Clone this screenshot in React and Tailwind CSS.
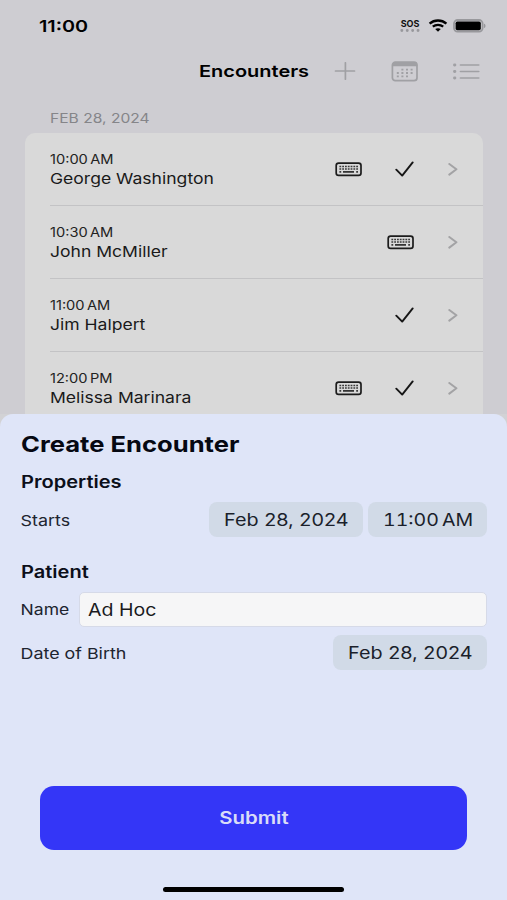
import React, { useState } from 'react';

const encounters = [
  { id: 1, time: '10:00 AM', name: 'George Washington', typed: true, done: true },
  { id: 2, time: '10:30 AM', name: 'John McMiller', typed: true, done: false },
  { id: 3, time: '11:00 AM', name: 'Jim Halpert', typed: false, done: true },
  { id: 4, time: '12:00 PM', name: 'Melissa Marinara', typed: true, done: true },
];

// Wide text, stretched sideways from its left edge
function Wide({ className = '', children }) {
  return (
    <span className={`inline-block whitespace-nowrap origin-left ${className}`}>{children}</span>
  );
}

function KeyboardIcon() {
  return (
    <svg width="27" height="15" viewBox="0 0 27 15" fill="none">
      <rect x="1.2" y="1.1" width="24.8" height="12.2" rx="2.4" stroke="#1c1c1c" strokeWidth="1.7" />
      <path d="M4.4 4.5H23M4.4 7H23" stroke="#3a3a3a" strokeWidth="1.7" strokeDasharray="1.8 1" />
      <path d="M4.4 9.9h1.8M21.2 9.9H23" stroke="#3a3a3a" strokeWidth="1.6" />
      <path d="M8 9.9h11" stroke="#222" strokeWidth="1.6" />
    </svg>
  );
}

function CheckIcon() {
  return (
    <svg width="19" height="16" viewBox="0 0 19 16" fill="none">
      <path d="M1.3 8.7L7.2 14.6L17.7 1.4" stroke="#161616" strokeWidth="1.9" strokeLinecap="round" strokeLinejoin="round" />
    </svg>
  );
}

function ChevronIcon() {
  return (
    <svg width="10" height="13" viewBox="0 0 10 13" fill="none">
      <path d="M1.3 1L8.4 6.3L1.3 11.6" stroke="#a3a3a5" strokeWidth="2" strokeLinecap="round" strokeLinejoin="round" />
    </svg>
  );
}

function StatusBar() {
  return (
    <div className="flex h-[50px] items-center pt-px pl-[39px] pr-[21px]">
      <Wide className="pt-[2px] text-[16.5px] font-semibold text-black scale-x-[1.2]">11:00</Wide>
      <div className="ml-auto flex items-center">
        <div className="mr-[8px] flex w-[20px] flex-col items-center">
          <span className="text-[9px] leading-[9px] font-bold text-[#111]">SOS</span>
          <svg width="20" height="3" viewBox="0 0 20 3" className="mt-[1px]">
            <path d="M1.8 1.5h18" stroke="#98989c" strokeWidth="2.8" strokeLinecap="round" strokeDasharray="0.1 5.3" />
          </svg>
        </div>
        <svg width="20" height="13" viewBox="0 0 20 13" fill="none" className="mr-[5px]">
          <path d="M1.6 4.6C6.4 0.4 13.6 0.4 18.4 4.6" stroke="#000" strokeWidth="2.4" />
          <path d="M4.8 7.7C7.8 5.2 12.2 5.2 15.2 7.7" stroke="#000" strokeWidth="2.3" />
          <path d="M7.2 10.1C8.8 8.8 11.2 8.8 12.8 10.1L10 12.7Z" fill="#000" />
        </svg>
        <svg width="33" height="14" viewBox="0 0 33 14" fill="none">
          <rect x="1" y="1" width="28.6" height="11.6" rx="3.6" stroke="#98989c" strokeWidth="1.8" />
          <rect x="2.6" y="2.5" width="25.2" height="8.7" rx="1.8" fill="#000" />
          <path d="M31 4.7c2 0.6 2 3.7 0 4.3z" fill="#98989c" />
        </svg>
      </div>
    </div>
  );
}

function NavBar() {
  return (
    <div className="flex h-[42px] items-center pl-[199px] text-[#a0a0a4]">
      <Wide className="w-[135px] text-[16.5px] font-semibold text-black scale-x-[1.21]">Encounters</Wide>
      <svg width="22" height="18" viewBox="0 0 22 18" fill="none" stroke="currentColor" className="shrink-0">
        <path d="M1.5 9h19M11.4 0.8v16.4" strokeWidth="1.7" strokeLinecap="round" />
      </svg>
      <svg width="28" height="21" viewBox="0 0 28 21" fill="none" className="ml-[35px] shrink-0">
        <rect x="1.4" y="1.1" width="24.6" height="18.6" rx="3" stroke="currentColor" strokeWidth="1.7" />
        <path d="M1.2 5.2V4a3 3 0 0 1 3-3h19a3 3 0 0 1 3 3v1.2z" fill="currentColor" />
        <path d="M10.4 8.6h12M5.8 12h16.6M5.8 15.4h12" stroke="currentColor" strokeWidth="1.8" strokeDasharray="2 2.6" />
      </svg>
      <svg width="28" height="17" viewBox="0 0 28 17" fill="none" stroke="currentColor" className="ml-[33px] shrink-0">
        <path d="M8.4 2h18.4M8.4 8.5h18.4M8.4 15h18.4" strokeWidth="1.6" strokeLinecap="round" />
        <path d="M2.5 2h0.4M2.5 8.5h0.4M2.5 15h0.4" strokeWidth="2.9" strokeLinecap="round" />
      </svg>
    </div>
  );
}

function EncounterRow({ encounter, last }) {
  return (
    <li className={`ml-[25px] flex h-[73px] items-center border-b ${last ? 'border-transparent' : 'border-[#c3c3c5]'}`}>
      <div className="flex flex-col pt-[2px]">
        <Wide className="text-[12.5px] leading-[18px] text-[#222] [word-spacing:-1.5px] scale-x-[1.17]">{encounter.time}</Wide>
        <Wide className="text-[15px] leading-[20px] text-[#1a1a1a] scale-x-[1.17]">{encounter.name}</Wide>
      </div>
      <div className="ml-auto flex items-center pr-[25px]">
        {encounter.typed && <KeyboardIcon />}
        {encounter.done && (
          <div className="ml-[33px]">
            <CheckIcon />
          </div>
        )}
        <div className="ml-[34px]">
          <ChevronIcon />
        </div>
      </div>
    </li>
  );
}

function Pill({ className = '', children }) {
  return (
    <button className={`h-[35px] rounded-[8px] bg-[#d1dae7] pt-[2px] pl-[15px] text-left text-[17px] text-[#1b1f2b] ${className}`}>
      {children}
    </button>
  );
}

export default function App() {
  const [name, setName] = useState('Ad Hoc');

  return (
    <div className="flex h-[900px] w-[507px] flex-col overflow-hidden bg-[#cecdd2] font-['Inter','Liberation_Sans',sans-serif]">
      {/* Encounter list behind the sheet */}
      <div className="h-[414px] shrink-0 overflow-hidden">
        <StatusBar />
        <NavBar />
        <div className="flex h-[41px] items-center pt-[12px] pl-[50px]">
          <Wide className="text-[13px] text-[#858589] scale-x-[1.2]">FEB 28, 2024</Wide>
        </div>
        <ul className="mr-[24px] ml-[25px] h-[320px] rounded-[10px] bg-[#d9d9d9]">
          {encounters.map((e, i) => (
            <EncounterRow key={e.id} encounter={e} last={i === encounters.length - 1} />
          ))}
        </ul>
      </div>

      {/* Create Encounter sheet */}
      <div className="bg-[#d2d2d5]">
        <section className="flex h-[486px] flex-col rounded-t-[13px] bg-[#dfe5f8] px-[20px] pt-[14px]">
          <h1 className="h-[32px] pl-[0.5px] text-[21.5px] leading-[32px] font-bold text-[#060812]">
            <Wide className="scale-x-[1.19]">Create Encounter</Wide>
          </h1>
          <h2 className="mt-[10px] h-[24px] pl-[0.5px] text-[17px] leading-[24px] font-semibold text-[#0c0f1a]">
            <Wide className="scale-x-[1.18]">Properties</Wide>
          </h2>
          <div className="mt-[8px] flex h-[35px] items-center">
            <Wide className="pt-[3px] pl-[0.5px] text-[15px] text-[#20242f] scale-x-[1.19]">Starts</Wide>
            <Pill className="ml-auto w-[154px]">
              <Wide className="scale-x-[1.165]">Feb 28, 2024</Wide>
            </Pill>
            <Pill className="ml-[5px] w-[119px]">
              <Wide className="tabular-nums [word-spacing:-2px] scale-x-[1.15]">11:00 AM</Wide>
            </Pill>
          </div>
          <h2 className="mt-[23px] h-[24px] pl-[0.5px] text-[17px] leading-[24px] font-semibold text-[#0c0f1a]">
            <Wide className="scale-x-[1.18]">Patient</Wide>
          </h2>
          <div className="mt-[8px] flex h-[34px] items-center">
            <Wide className="w-[59px] pt-[3px] pl-[0.5px] text-[15px] text-[#20242f] scale-x-[1.17]">Name</Wide>
            <div className="h-[35px] flex-1 overflow-hidden rounded-[5px] border border-[#d6dae8] bg-[#f6f6f7]">
              <input
                value={name}
                onChange={(e) => setName(e.target.value)}
                className="h-full w-[340px] origin-left pt-px pl-[7px] text-[17px] text-[#1b1b1e] outline-none scale-x-[1.15]"
              />
            </div>
          </div>
          <div className="mt-[9px] flex h-[35px] items-center">
            <Wide className="pt-[3px] pl-[0.5px] text-[15px] text-[#20242f] scale-x-[1.19]">Date of Birth</Wide>
            <Pill className="ml-auto w-[154px]">
              <Wide className="scale-x-[1.165]">Feb 28, 2024</Wide>
            </Pill>
          </div>
          <button className="mx-[20px] mt-auto mb-[37px] h-[64px] shrink-0 rounded-[14px] bg-[#3436f7] text-[17px] font-semibold text-[#d9dcf8]">
            <span className="inline-block pt-[2px] scale-x-[1.2]">Submit</span>
          </button>
          <div className="mx-auto mb-[8px] h-[5px] w-[181px] shrink-0 rounded-full bg-black" />
        </section>
      </div>
    </div>
  );
}
